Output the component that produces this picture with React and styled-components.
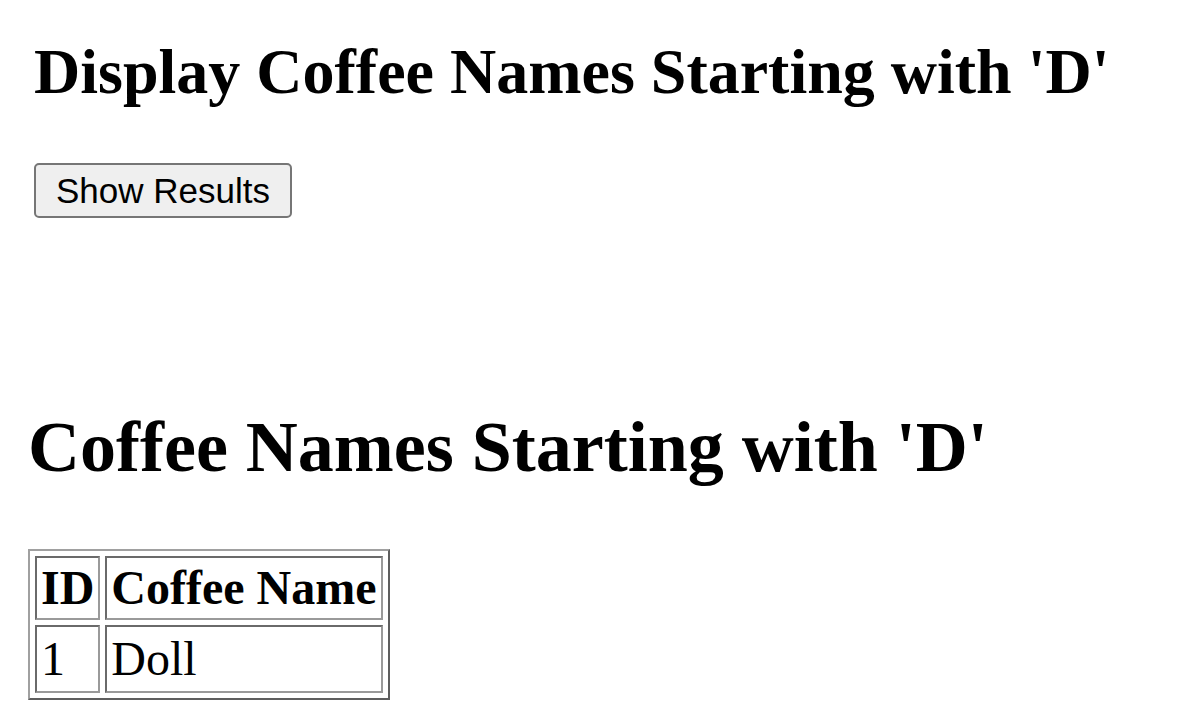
import React from "react";
import styled, { createGlobalStyle } from "styled-components";

const GlobalStyle = createGlobalStyle`
  html, body {
    margin: 0;
    padding: 0;
    background: #ffffff;
  }
  body {
    font-family: "Liberation Serif", "Times New Roman", serif;
    color: #000;
  }
`;

const Page = styled.div`
  padding: 0 0 0 28px;
`;

const QuerySection = styled.section`
  display: flex;
  flex-direction: column;
  align-items: flex-start;
  padding-left: 6px;
`;

const Title = styled.h2`
  margin: 35px 0 0;
  font-size: 64px;
  line-height: 74px;
  font-weight: bold;
`;

const ActionButton = styled.button`
  margin-top: 54px;
  height: 55px;
  padding: 0 20px;
  font-family: "Liberation Sans", Arial, sans-serif;
  font-size: 35px;
  color: #000;
  background: #efefef;
  border: 2px solid #767676;
  border-radius: 5px;
`;

const ResultTitle = styled.h1`
  margin: 188px 0 0;
  font-size: 72px;
  line-height: 83px;
  font-weight: bold;
`;

const ResultTable = styled.table`
  margin-top: 60px;
  border: 2px solid;
  border-color: #a0a0a0 #5e5e5e #5e5e5e #a0a0a0;
  border-spacing: 5px;
`;

const HeadCell = styled.th`
  font-size: 48px;
  font-weight: bold;
  line-height: 56px;
  padding: 2px 4px;
  text-align: left;
  border: 2px solid;
  border-color: #6a6a6a #9a9a9a #9a9a9a #6a6a6a;
`;

const BodyCell = styled.td`
  font-size: 48px;
  line-height: 60px;
  padding: 2px 4px;
  border: 2px solid;
  border-color: #6a6a6a #9a9a9a #9a9a9a #6a6a6a;
`;

const rows = [{ id: 1, name: "Doll" }];

export default function App() {
  return (
    <>
      <GlobalStyle />
      <Page>
        <QuerySection>
          <Title>Display Coffee Names Starting with 'D'</Title>
          <ActionButton type="button">Show Results</ActionButton>
        </QuerySection>
        <ResultTitle>Coffee Names Starting with 'D'</ResultTitle>
        <ResultTable>
          <thead>
            <tr>
              <HeadCell>ID</HeadCell>
              <HeadCell>Coffee Name</HeadCell>
            </tr>
          </thead>
          <tbody>
            {rows.map((r) => (
              <tr key={r.id}>
                <BodyCell>{r.id}</BodyCell>
                <BodyCell>{r.name}</BodyCell>
              </tr>
            ))}
          </tbody>
        </ResultTable>
      </Page>
    </>
  );
}
